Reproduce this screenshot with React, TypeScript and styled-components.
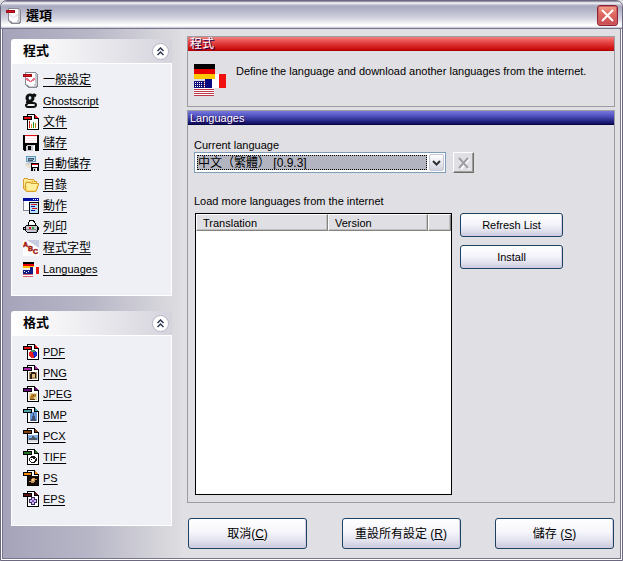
import React from "react";
import styled, { createGlobalStyle, css } from "styled-components";

const GlobalStyle = createGlobalStyle`
  * { box-sizing: border-box; }
  body {
    margin: 0;
    background: #e0dfe3;
    color: #000;
    font: 11px/14px "Liberation Sans", "Noto Sans CJK TC", sans-serif;
  }
  button, select { font: inherit; color: inherit; }
  svg { flex: none; }
`;

/* ---------- window frame ---------- */

const Window = styled.div`
  display: flex;
  flex-direction: column;
  min-height: 100vh;
  border: 1px solid #6b6880;
  border-radius: 7px 7px 0 0;
  background: #e0dfe3;
  overflow: hidden;
  box-shadow: inset 1px 0 #fff, inset -1px 0 #fff, inset 0 -1px #fff, inset 2px 0 #77758d, inset -2px 0 #77758d, inset 0 -2px #77758d;
  padding: 0 2px 2px;
`;

const TitleBar = styled.header`
  display: flex;
  align-items: center;
  gap: 4px;
  height: 28px;
  margin: 0 -2px;
  padding: 2px 4px 0 5px;
  border-bottom: 1px solid #77758d;
  background: linear-gradient(#77758d 0, #fff 2px, #d4d4df 3px, #a9a9bf 5px, #b4b4c8 9px, #d6d7e2 18px, #fff 24px, #fff 25px, #c0c0cf 27px);
`;

const Title = styled.h1`
  flex: 1;
  margin: 0;
  font-size: 13px;
  line-height: 18px;
  font-weight: 700;
`;

const CloseButton = styled.button`
  display: grid;
  place-items: center;
  width: 21px;
  height: 21px;
  padding: 0;
  border: 1px solid #8d2437;
  border-radius: 3px;
  background: linear-gradient(#f0a68f, #e06a60 40%, #c94b55);
  box-shadow: inset 0 0 0 1px #cf5e62;
`;

const Body = styled.div`
  display: flex;
  flex: 1;
`;

/* ---------- side bar ---------- */

const Sidebar = styled.nav`
  display: flex;
  flex-direction: column;
  gap: 15px;
  flex: 0 0 177px;
  padding: 10px 8px 16px;
  background: linear-gradient(90deg, #a5a3b9, #b8b7c7 50%, #dddde0);
`;

const SidePanel = styled.section`
  border-radius: 3px 3px 0 0;
  overflow: hidden;
`;

const SideHead = styled.div`
  display: flex;
  align-items: center;
  justify-content: space-between;
  height: 24px;
  padding: 0 3px 0 12px;
  background: linear-gradient(90deg, #fff, #f2f2f5 35%, #d5d4dd);
`;

const SideTitle = styled.h2`
  margin: 0;
  font-size: 13px;
  line-height: 18px;
  font-weight: 700;
`;

const FoldButton = styled.button`
  display: grid;
  place-items: center;
  width: 17px;
  height: 17px;
  padding: 0;
  border: 1px solid #b6b5c8;
  border-radius: 50%;
  background: #fff;
`;

const SideList = styled.ul`
  list-style: none;
  margin: 0;
  padding: 5px 11px 16px;
  border: 1px solid #fff;
  background: #eff0f5;
`;

const SideItem = styled.li`
  display: flex;
  align-items: center;
  gap: 4px;
  height: 21px;
`;

const SideLink = styled.a`
  color: #000;
  font-size: 12px;
  line-height: 16px;
  text-underline-offset: 2px;
  text-decoration-skip-ink: none;
`;

const LatinLink = styled(SideLink)`
  font-size: 11px;
`;

/* ---------- main area ---------- */

const Main = styled.main`
  display: flex;
  flex-direction: column;
  flex: 1;
  min-width: 0;
  padding: 7px 5px 9px 7px;
`;

const Group = styled.section<{ $grow?: boolean }>`
  display: flex;
  flex-direction: column;
  border: 1px solid #9d9da1;
  ${(p) => p.$grow && css`flex: 1; margin-top: 3px;`}
`;

const GroupTitle = styled.h2<{ $tone: "red" | "blue" }>`
  margin: 0;
  height: 14px;
  padding-left: 2px;
  font-size: ${(p) => (p.$tone === "red" ? "12px" : "11px")};
  line-height: 14px;
  font-weight: 400;
  color: #fff;
  text-shadow: 1px 1px #200050;
  background: ${(p) =>
    p.$tone === "red"
      ? "linear-gradient(#f08080, #e84848 35%, #c80808 90%, #a00000)"
      : "linear-gradient(#7878e0, #4c4cb8 40%, #101064 90%, #000030)"};
`;

const Intro = styled.div`
  display: flex;
  gap: 10px;
  height: 55px;
  padding: 13px 6px 0;
`;

const IntroText = styled.p`
  margin: 0;
`;

const Settings = styled.div`
  display: flex;
  flex-direction: column;
  flex: 1;
  padding: 13px 51px 7px 6px;
`;

const Label = styled.label`
  display: block;
`;

const Caption = styled.p`
  margin: 21px 0 5px;
`;

const ComboRow = styled.div`
  display: flex;
  gap: 7px;
  padding-right: 89px;
`;

const Combo = styled.div`
  display: flex;
  gap: 2px;
  flex: 1;
  min-width: 0;
  height: 21px;
  padding: 1px;
  border: 1px solid #7f9db9;
  background: #fff;
`;

const ComboSelect = styled.select`
  flex: 1;
  min-width: 0;
  margin: 1px 0 1px 1px;
  padding: 0;
  appearance: none;
  border: 1px dotted #000;
  border-radius: 0;
  background: #b2b4bf;
  font-size: 12px;
  line-height: 14px;
  outline: none;
`;

const ComboArrow = styled.span`
  display: grid;
  place-items: center;
  width: 15px;
  border: 1px solid #c6c6d6;
  border-radius: 2px;
  background: linear-gradient(#fff, #d3d3e0);
`;

const DeleteButton = styled.button`
  display: grid;
  place-items: center;
  width: 21px;
  height: 21px;
  padding: 0;
  border: 1px solid;
  border-color: #fff #716f64 #716f64 #fff;
  background: #e0dfe3;
  box-shadow: inset -1px -1px #9d9da1;
`;

const Transfer = styled.div`
  display: grid;
  grid-template-columns: minmax(0, 1fr) 103px;
  gap: 8px;
  flex: 1;
`;

const ListBox = styled.div`
  border: 1px solid #000;
  background: #fff;
  margin-left: 1px;
`;

const Table = styled.table`
  width: 100%;
  table-layout: fixed;
  border-collapse: separate;
  border-spacing: 0;
`;

const Th = styled.th<{ $width?: string }>`
  width: ${(p) => p.$width ?? "auto"};
  height: 17px;
  padding: 0 6px;
  border: 1px solid;
  border-color: #fff #85837c #85837c #fff;
  background: #e0dfe3;
  box-shadow: inset -1px -1px #c0bfc5;
  font-weight: 400;
  line-height: 14px;
  text-align: left;
`;

const Actions = styled.div`
  display: flex;
  flex-direction: column;
  gap: 8px;
`;

const PushButton = styled.button<{ $large?: boolean }>`
  width: ${(p) => (p.$large ? "119px" : "103px")};
  height: ${(p) => (p.$large ? "31px" : "24px")};
  padding: 0;
  border: 1px solid #1c4266;
  border-radius: 3px;
  background: linear-gradient(#fff, #f5f5fb 45%, #e2e2ee 75%, #c9c8db);
  box-shadow: inset -1px -1px #d0cfe0;
  font-size: ${(p) => (p.$large ? "12px" : "11px")};
`;

const Footer = styled.footer`
  display: flex;
  justify-content: space-between;
  gap: 8px;
  padding: 15px 1px 0;
`;

/* ---------- pixel icons ---------- */

const palette: Record<string, string> = {
  k: "#000000", w: "#ffffff", r: "#e01018", R: "#98101c", g: "#888890", G: "#c8c8d0",
  l: "#e8e8ee", p: "#ffe8ee", P: "#f0708c", b: "#0010a0", B: "#6898b8", c: "#b8e0f8",
  y: "#fff0a0", Y: "#f8d868", o: "#d8a030", t: "#e8e0d0", n: "#20b040", d: "#505868",
};

const Sprite = ({ rows }: { rows: string[] }) => {
  const runs: React.ReactNode[] = [];
  rows.forEach((row, y) => {
    let x = 0;
    while (x < row.length) {
      let end = x + 1;
      while (end < row.length && row[end] === row[x]) end++;
      if (row[x] !== ".")
        runs.push(<rect key={`${x}-${y}`} x={x} y={y} width={end - x} height={1} fill={palette[row[x]]} />);
      x = end;
    }
  });
  return (
    <svg width="16" height="16" viewBox="0 0 16 16" shapeRendering="crispEdges" aria-hidden="true">
      {runs}
    </svg>
  );
};

const scroll = [
  "..ggggggggggg...",
  "..gwwwwwwwwwGg..",
  "RRRRRRRRRwwwGGg.",
  "RrrrrrrrRwwwGGg.",
  "RRRRRRRRRwwwGGg.",
  "..gwwwwwwwwwGGg.",
  "..gPPwwwwwPPGGg.",
  "..gPPPwwwPPPGGg.",
  "..gwPPPwPPPwGGg.",
  "..gwwwPPPwwwGGg.",
  "..gwwwwwwwwwGGg.",
  "..glwwwwwwwwGGg.",
  "..gGlwwwwwwGGGg.",
  "...ggGwwwwwGGGg.",
  "....ggGGGGGGGgg.",
  ".....ggggggggg..",
];
const titleScroll = scroll.map((r) => r.replace(/P/g, "l"));
const floppy = [
  "kkrrrrrrrrrrrrkk",
  "kkppppppppppppkk",
  "kkwwwwwwwwwwwwkk",
  "kkppppppppppppkk",
  "kkwwwwwwwwwwwwkk",
  "kkppppppppppppkk",
  "kkwwwwwwwwwwwwkk",
  "kkppppppppppppkk",
  "kkkkkkkkkkkkkkkk",
  "kkkkkkkkkkkkkkkk",
  "kkkkGGGGGGGwkkkk",
  "kkkGGkkkGGwwkkkk",
  "kkkGGkkkGGwwkkkk",
  "kkkGGkkkGGwwkkkk",
  "kkkGGkkkGGwwkkkk",
  ".kkGGGGGGGwwkkkk",
];
const autosave = [
  "...BBBBBBBBBB...",
  "...BccccccccB...",
  "...BcddddddcB...",
  "...BcdBBBBdcB...",
  "...BcdddddccB...",
  "...BBBBBBBBBB...",
  ".....GGGGG......",
  "...GGGGGkkkkkkkk",
  "..tttGttkrrrrrrk",
  "..ttttttkwwwwwwk",
  "...tttttkwwwwwwk",
  ".....tttkkkkkkkk",
  "........kkGGGwkk",
  "........kkGkGwkk",
  "........kkGkGwkk",
  "................",
];
const folder = [
  "................",
  ".oooo...........",
  "oYyyYoooooo.....",
  "oyyyyyyyyyYo....",
  "oyYYYYYYYoYooo..",
  "oyYoooooYYYyyo..",
  "oyoYyyyYoooooooo",
  "oyoyyyyyyyyyyyYo",
  "oYoyyyyyyyyyyyYo",
  "oYoYyyyyyyyyyYo.",
  "oYoYyyyyyyyyyYo.",
  "oYoYyyyyyyyyyYo.",
  ".ooYyyyyyyyyYo..",
  "..oYYYYYYYYYYo..",
  "...oooooooooo...",
  "................",
];
const actionIcon = [
  "bbbbbbbbbbbbbbbb",
  "bbbbbbbbbbwbwbwb",
  "bbbbbbbbbbbbbbbb",
  "gwwwwwwwwwwwwwwg",
  "gwwwwwkkkkkkkkkk",
  "gwwwwwkcccccccck",
  "gwwwwwkcrrrrrrck",
  "gwwwwwkcccccccck",
  "gwwwwwkcbbbbccck",
  "gwwwwwkcccccccck",
  "gwwwwwkccrrrrrck",
  "gwwwwwkcccccccck",
  "ggggggkcbbbbccck",
  "......kcccccccck",
  "......kcccccccck",
  "......kkkkkkkkkk",
];
const printer = [
  "................",
  "......kkkkk.....",
  "......kwwwkk....",
  ".....kwwwwwk....",
  ".....kwwwwwwk...",
  ".....kwwwwwwk...",
  "...kkkkkkkkkkk..",
  "..kGGGGGGGGGGGk.",
  "kkkGGGrrGnnGGGkk",
  "kGkGGGrrGnnGGGkk",
  "kkkggggggggggGkk",
  "..kGGGGGGGGGGgk.",
  "...kGGGGGGGGGgk.",
  "....kkkkkkkkkk..",
  "................",
  "................",
];

const PageIcon = ({ tag, children }: { tag: string; children: React.ReactNode }) => (
  <svg width="16" height="16" viewBox="0 0 16 16" shapeRendering="crispEdges" aria-hidden="true">
    <path d="M4 0h8v1h1v1h1v1h1v1h1v12H4z" fill="#000" />
    <path d="M5 1h6v4h4v10H5z" fill="#fff" />
    <path d="M12 1h1v1h1v1h1v1h-3z" fill={tag} />
    {children}
    <path d="M0 2h9v4H0z" fill="#000" />
    <path d="M1 3h7v2H1z" fill={tag} />
  </svg>
);

const Flags = () => (
  <svg width="32" height="32" viewBox="0 0 32 32" shapeRendering="crispEdges" aria-hidden="true">
    <path d="M0 0h21v5H0z" fill="#000" />
    <path d="M0 5h21v5H0z" fill="#e80000" />
    <path d="M0 10h21v5H0z" fill="#ffc800" />
    <path d="M0 17h20v15H0z" fill="#fff" />
    <path d="M0 17h20v1H0zM0 19h20v1H0zM0 21h20v1H0zM0 23h20v1H0zM0 25h20v1H0zM0 27h20v1H0zM0 29h20v1H0zM0 31h20v1H0z" fill="#b83848" />
    <path d="M0 17h10v7H0z" fill="#101078" />
    <path d="M1 18h1v1H1zM3 18h1v1H3zM5 18h1v1H5zM7 18h1v1H7zM1 20h1v1H1zM3 20h1v1H3zM5 20h1v1H5zM7 20h1v1H7zM1 22h1v1H1zM3 22h1v1H3zM5 22h1v1H5zM7 22h1v1H7z" fill="#fff" />
    <path d="M11 10h7v14h-7z" fill="#080880" />
    <path d="M18 10h7v14h-7z" fill="#fff" />
    <path d="M25 10h7v14h-7z" fill="#f01010" />
    <path d="M11 10h10v5H11z" fill="#ffc800" />
  </svg>
);

const MiniFlags = () => (
  <svg width="16" height="16" viewBox="0 0 16 16" shapeRendering="crispEdges" aria-hidden="true">
    <path d="M0 1h11v2H0z" fill="#000" />
    <path d="M0 3h11v2H0z" fill="#e80000" />
    <path d="M0 5h11v2H0z" fill="#ffc000" />
    <path d="M7 6h3v7H7zM0 9h7v4H0z" fill="#101888" />
    <path d="M10 6h3v7h-3z" fill="#fff" />
    <path d="M13 6h3v7h-3z" fill="#e81818" />
    <path d="M1 10h1v1H1zM3 11h1v1H3zM5 10h1v1H5z" fill="#fff" />
    <path d="M0 13h10v1H0zM0 15h10v1H0z" fill="#d86070" />
    <path d="M0 14h10v1H0z" fill="#fff" />
  </svg>
);

const Ghost = () => (
  <svg width="16" height="16" viewBox="0 0 16 16" fill="none" stroke="#101010" aria-hidden="true">
    <circle cx="7" cy="5" r="3" fill="#bcd8ee" strokeWidth="3" />
    <path d="M9 3l2-1 2 1" strokeWidth="3" />
    <path d="M5 8q-3 2 1 2h4q3 0 3 2t-3 2H5q-2 0-2-2l2-2" strokeWidth="2" />
    <path d="M6 4h2M6 6h1" stroke="#fff" />
  </svg>
);

const Letters = () => (
  <svg width="16" height="16" viewBox="0 0 16 16" aria-hidden="true">
    <path d="M0 0h16v16H0z" fill="#fff" />
    <path d="M4 0h12v8z" fill="#c8cce0" />
    <g fill="#d02c18" stroke="#902010" strokeWidth="0.5" fontFamily="Liberation Sans" fontWeight="700" fontSize="7">
      <text x="0" y="7">A</text>
      <text x="5" y="11">B</text>
      <text x="10" y="14">C</text>
    </g>
  </svg>
);

const Chevrons = () => (
  <svg width="9" height="9" viewBox="0 0 9 9" fill="none" stroke="#303850" strokeWidth="1.5" aria-hidden="true">
    <path d="M1.5 4l3-3 3 3M1.5 8l3-3 3 3" />
  </svg>
);

type LinkEntry = { label: string; icon: React.ReactNode; latin?: boolean };

const programLinks: LinkEntry[] = [
  { label: "一般設定", icon: <Sprite rows={scroll} /> },
  { label: "Ghostscript", icon: <Ghost />, latin: true },
  {
    label: "文件",
    icon: (
      <PageIcon tag="#e01018">
        <path d="M6 7h1v7H6z" fill="#c02020" />
        <path d="M8 10h1v4H8z" fill="#e08020" />
        <path d="M10 8h1v6h-1z" fill="#209030" />
        <path d="M12 9h1v5h-1z" fill="#c08000" />
      </PageIcon>
    ),
  },
  { label: "儲存", icon: <Sprite rows={floppy} /> },
  { label: "自動儲存", icon: <Sprite rows={autosave} /> },
  { label: "目錄", icon: <Sprite rows={folder} /> },
  { label: "動作", icon: <Sprite rows={actionIcon} /> },
  { label: "列印", icon: <Sprite rows={printer} /> },
  { label: "程式字型", icon: <Letters /> },
  { label: "Languages", icon: <MiniFlags />, latin: true },
];

const formatLinks: LinkEntry[] = [
  {
    label: "PDF",
    latin: true,
    icon: (
      <PageIcon tag="#e01018">
        <path d="M8 6h2v8H8v-1H7v-1H6V8h1V7h1z" fill="#e82020" />
        <path d="M10 6h2v1h1v1h1v4h-1v1h-1v1h-2z" fill="#1828c8" />
        <path d="M8 6h4v2H8z" fill="#409060" />
        <path d="M8 11h3v3H8z" fill="#e82020" />
      </PageIcon>
    ),
  },
  {
    label: "PNG",
    latin: true,
    icon: (
      <PageIcon tag="#a828a8">
        <path d="M6 7h8v7H6z" fill="#b09868" />
        <path d="M8 7h4v1h1v5h-1v-3H9v4H7V9h1z" fill="#302018" />
        <path d="M9 9h3v3H9z" fill="#e0c080" />
      </PageIcon>
    ),
  },
  {
    label: "JPEG",
    latin: true,
    icon: (
      <PageIcon tag="#680878">
        <path d="M6 7h8v7H6z" fill="#e8d8a8" />
        <path d="M8 8h5v3h-2v2H7v-3h1z" fill="#b88028" />
        <path d="M10 9h1v1h-1zM7 13h5v1H7z" fill="#584018" />
      </PageIcon>
    ),
  },
  {
    label: "BMP",
    latin: true,
    icon: (
      <PageIcon tag="#48a0a0">
        <path d="M7 5h7v9H7z" fill="#6898d8" />
        <path d="M10 6h1v3h1v3h1v2H8v-2h1V9h1z" fill="#405070" />
      </PageIcon>
    ),
  },
  {
    label: "PCX",
    latin: true,
    icon: (
      <PageIcon tag="#804010">
        <path d="M5 7h10v6H5z" fill="#80b0e0" />
        <path d="M9 8h2v1h1v1h2v2H6v-2h3z" fill="#505868" />
        <path d="M5 12h10v2H5z" fill="#d8dce0" />
      </PageIcon>
    ),
  },
  {
    label: "TIFF",
    latin: true,
    icon: (
      <PageIcon tag="#207028">
        <path d="M8 7h4v1h1v1h1v3h-1v1h-1v1H8v-1H7v-1H6V9h1V8h1z" fill="#181818" />
        <path d="M7 9h3v1h2v2h-1v1H8v-1H7z" fill="#fff" />
        <path d="M8 10h1v1H8z" fill="#000" />
        <path d="M12 9h1v1h-1z" fill="#fff" />
      </PageIcon>
    ),
  },
  {
    label: "PS",
    latin: true,
    icon: (
      <PageIcon tag="#f08818">
        <path d="M5 6h10v9H5z" fill="#180c08" />
        <path d="M6 11h2V9h1V8h3v1h2v1h-2v2h-1v1H8v-1H6z" fill="#c89050" />
        <path d="M9 9h2v2H9z" fill="#f0d090" />
      </PageIcon>
    ),
  },
  {
    label: "EPS",
    latin: true,
    icon: (
      <PageIcon tag="#581010">
        <path d="M8 6h4v2h2v4h-2v2H8v-2H6V8h2z" fill="#382868" />
        <path d="M9 7h2v2h2v2h-2v2H9v-2H7V9h2z" fill="#d0b8f0" />
        <path d="M9 9h2v2H9z" fill="#8858b8" />
      </PageIcon>
    ),
  },
];

const LinkPanel = ({ title, links }: { title: string; links: LinkEntry[] }) => (
  <SidePanel>
    <SideHead>
      <SideTitle>{title}</SideTitle>
      <FoldButton aria-label={`收合 ${title}`}>
        <Chevrons />
      </FoldButton>
    </SideHead>
    <SideList>
      {links.map((link) => {
        const LinkPart = link.latin ? LatinLink : SideLink;
        return (
          <SideItem key={link.label}>
            {link.icon}
            <LinkPart href="#">{link.label}</LinkPart>
          </SideItem>
        );
      })}
    </SideList>
  </SidePanel>
);

export default function App() {
  return (
    <>
      <GlobalStyle />
      <Window>
        <TitleBar>
          <Sprite rows={titleScroll} />
          <Title>選項</Title>
          <CloseButton aria-label="關閉">
            <svg width="13" height="13" viewBox="0 0 13 13" stroke="#fff" strokeWidth="2" aria-hidden="true">
              <path d="M1 1l11 11M12 1L1 12" />
            </svg>
          </CloseButton>
        </TitleBar>
        <Body>
          <Sidebar>
            <LinkPanel title="程式" links={programLinks} />
            <LinkPanel title="格式" links={formatLinks} />
          </Sidebar>
          <Main>
            <Group>
              <GroupTitle $tone="red">程式</GroupTitle>
              <Intro>
                <Flags />
                <IntroText>Define the language and download another languages from the internet.</IntroText>
              </Intro>
            </Group>
            <Group $grow>
              <GroupTitle $tone="blue">Languages</GroupTitle>
              <Settings>
                <Label htmlFor="language">Current language</Label>
                <ComboRow>
                  <Combo>
                    <ComboSelect id="language">
                      <option>中文（繁體） [0.9.3]</option>
                    </ComboSelect>
                    <ComboArrow>
                      <svg width="9" height="6" viewBox="0 0 9 6" fill="none" stroke="#303038" strokeWidth="2" aria-hidden="true">
                        <path d="M1 1l3.500 3.500L8 1" />
                      </svg>
                    </ComboArrow>
                  </Combo>
                  <DeleteButton aria-label="刪除" disabled>
                    <svg width="12" height="12" viewBox="0 0 12 12" fill="none" strokeWidth="2" aria-hidden="true">
                      <path d="M2 3l9 9M11 2l-8 10" stroke="#fff" />
                      <path d="M1 1l9 10M10 1L1 11" stroke="#a0a0a4" />
                    </svg>
                  </DeleteButton>
                </ComboRow>
                <Caption>Load more languages from the internet</Caption>
                <Transfer>
                  <ListBox>
                    <Table>
                      <thead>
                        <tr>
                          <Th>Translation</Th>
                          <Th $width="100px">Version</Th>
                          <Th $width="23px" />
                        </tr>
                      </thead>
                    </Table>
                  </ListBox>
                  <Actions>
                    <PushButton>Refresh List</PushButton>
                    <PushButton>Install</PushButton>
                  </Actions>
                </Transfer>
              </Settings>
            </Group>
            <Footer>
              <PushButton $large>取消(<u>C</u>)</PushButton>
              <PushButton $large>重設所有設定 (<u>R</u>)</PushButton>
              <PushButton $large>儲存 (<u>S</u>)</PushButton>
            </Footer>
          </Main>
        </Body>
      </Window>
    </>
  );
}
